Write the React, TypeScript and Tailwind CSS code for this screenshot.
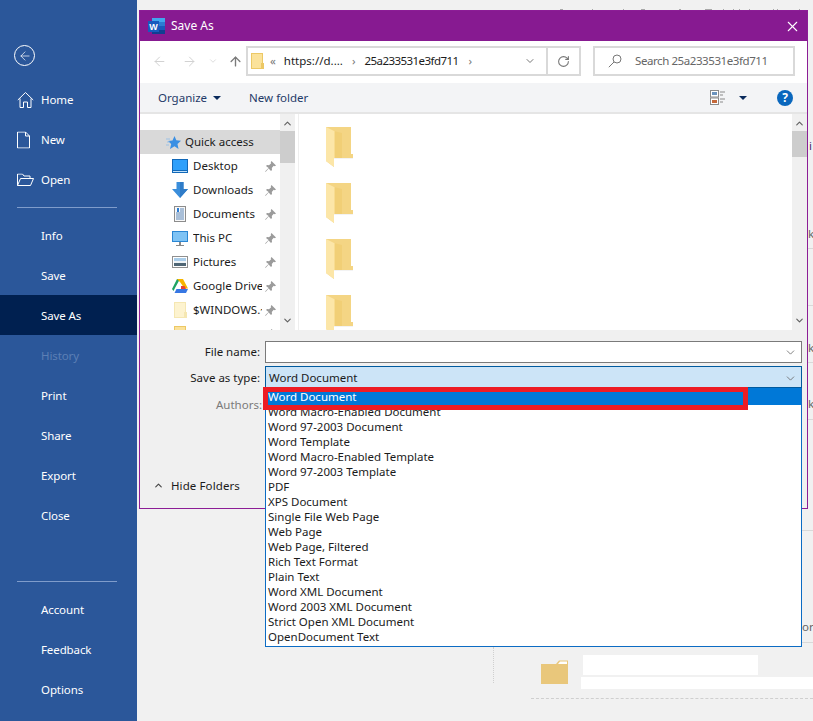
import React from 'react';
import { ArrowLeft, ArrowRight, ArrowUp, ChevronDown, ChevronUp, RotateCw, X } from 'lucide-react';

const font = { fontFamily: '"Noto Sans", "Open Sans", sans-serif' };

const topItems = [
  { label: 'Home', icon: 'home' },
  { label: 'New', icon: 'new' },
  { label: 'Open', icon: 'open' },
];
const midItems = ['Info', 'Save', 'Save As', 'History', 'Print', 'Share', 'Export', 'Close'];
const bottomItems = ['Account', 'Feedback', 'Options'];

const fileTypes = [
  'Word Macro-Enabled Document',
  'Word 97-2003 Document',
  'Word Template',
  'Word Macro-Enabled Template',
  'Word 97-2003 Template',
  'PDF',
  'XPS Document',
  'Single File Web Page',
  'Web Page',
  'Web Page, Filtered',
  'Rich Text Format',
  'Plain Text',
  'Word XML Document',
  'Word 2003 XML Document',
  'Strict Open XML Document',
  'OpenDocument Text',
];

// tops of the letters of the page behind, just above the dialog
const behindDots = [
  [560, 3], [592, 1], [623, 1], [641, 4], [679, 2], [705, 7], [723, 1], [733, 1], [739, 1], [749, 1], [773, 1], [777, 1], [799, 1],
];

function BackstageIcon({ name }: { name: string }) {
  if (name === 'home') {
    return (
      <svg width="17" height="17" viewBox="0 0 17 17" fill="none" stroke="#fff" strokeWidth="1">
        <path d="M.8 8.500 8.500 1l7.700 7.500M3 7v9h3.500v-5.500h4V16H14V7" />
      </svg>
    );
  }
  if (name === 'new') {
    return (
      <svg width="13" height="17" viewBox="0 0 13 17" fill="none" stroke="#fff" strokeWidth="1">
        <path d="M.5.5h8l4 4v12H.5zM8.500.5v4h4" />
      </svg>
    );
  }
  return (
    <svg width="17" height="13" viewBox="0 0 17 13" fill="none" stroke="#fff" strokeWidth="1">
      <path d="M.5 12V.5h5l1.500 2h6v2.500M.5 12l3-7h13l-3 7z" />
    </svg>
  );
}

function WordIcon() {
  return (
    <svg width="17" height="16" viewBox="0 0 17 16">
      <rect x="4" y="0" width="13" height="16" fill="#2b7cd3" />
      <rect x="4" y="0" width="13" height="4" fill="#41a5ee" />
      <rect x="4" y="8" width="13" height="4" fill="#185abd" />
      <rect x="4" y="12" width="13" height="4" fill="#103f91" />
      <rect x="0" y="3" width="11" height="11" fill="#185abd" />
      <text x="5.500" y="12" fill="#fff" fontSize="9" fontWeight="700" textAnchor="middle" style={{ fontFamily: '"Liberation Sans", sans-serif' }}>W</text>
    </svg>
  );
}

function SmallFolder({ pale }: { pale?: boolean }) {
  return (
    <svg width="13" height="16" viewBox="0 0 13 16">
      <rect x="0.500" y="0.500" width="11" height="15" fill={pale ? '#fdf3cf' : '#fbe29a'} stroke={pale ? '#f5e7b2' : '#ecc865'} />
      <rect x="10" y="10" width="3" height="6" fill={pale ? '#f5e7b2' : '#ecc865'} />
    </svg>
  );
}

function BigFolder() {
  return (
    <svg width="28" height="41" viewBox="0 0 28 41" className="shrink-0">
      <path d="M0 0H25V27H27V31H8V40L0 34Z" fill="#f4d584" />
      <path d="M8 4 16 6V31H8Z" fill="#f1cf76" />
      <path d="M0 0L8 4V40L0 34Z" fill="#fce6a8" />
      <path d="M8 4H9V31H8Z" fill="#f8dc90" />
      <path d="M8 31H27V32H8Z" fill="#f3f3f3" />
    </svg>
  );
}

function Pin() {
  return (
    <svg width="11" height="11" viewBox="0 0 11 11" fill="#9b9b9b">
      <path d="M6.500 0 11 4.500 9.800 5.300 8.700 4.800 6.800 7 7 9 6 10 3.600 7.400 1 10.500 0 11 .5 10 3.600 7 1 5 2 4 4 4.200 6.200 2.300 5.700 1.200Z" />
    </svg>
  );
}

function NavIcon({ name }: { name: string }) {
  switch (name) {
    case 'desktop':
      return (
        <svg width="16" height="14" viewBox="0 0 16 14">
          <rect x="0" y="0" width="16" height="14" fill="#1168b8" />
          <rect x="1" y="1" width="14" height="10" fill="#2ea0fb" />
          <rect x="1" y="12" width="14" height="1" fill="#bfe0fa" />
        </svg>
      );
    case 'downloads':
      return (
        <svg width="16" height="16" viewBox="0 0 16 16">
          <path d="M4.500 0h7v7H16l-8 9-8-9h4.500z" fill="#3a8edb" />
          <path d="M8 0h3.500v7H16l-8 9z" fill="#2f7cc8" />
        </svg>
      );
    case 'documents':
      return (
        <svg width="12" height="16" viewBox="0 0 12 16">
          <rect x="0.500" y="0.500" width="11" height="15" fill="#f8f8f8" stroke="#8c8c8c" />
          <path d="M6 3h4M6 5h4M2 7h8M2 9h8M2 11h8M2 13h8" stroke="#5a86b8" strokeWidth="1" />
          <rect x="3" y="2" width="2" height="4" fill="#2b7cd3" />
        </svg>
      );
    case 'pc':
      return (
        <svg width="16" height="15" viewBox="0 0 16 15">
          <rect x="0" y="0" width="16" height="11" fill="#2a86d3" />
          <rect x="1" y="1" width="14" height="9" fill="#7ec3f5" />
          <rect x="7" y="11" width="2" height="3" fill="#8a8a8a" />
          <rect x="4" y="14" width="8" height="1" fill="#8a8a8a" />
        </svg>
      );
    case 'pictures':
      return (
        <svg width="16" height="12" viewBox="0 0 16 12">
          <rect x="0.500" y="0.500" width="15" height="11" fill="#fff" stroke="#8f8f8f" />
          <rect x="2" y="2" width="12" height="4" fill="#a9cdea" />
          <rect x="2" y="5" width="12" height="2" fill="#eef3f6" />
          <rect x="2" y="7" width="12" height="3" fill="#4f6675" />
        </svg>
      );
    case 'drive':
      return (
        <svg width="16" height="14" viewBox="0 0 16 14">
          <path d="M5 0h3l-5 9-1.500 3L0 10z" fill="#1fa463" />
          <path d="M5 0h6l5 9.500h-3.500L8 3z" fill="#f7b500" />
          <path d="M4.500 10H16l-2 4H2.500z" fill="#3777e3" />
          <path d="M9 7h3.500l1.500 3H9z" fill="#e94235" />
        </svg>
      );
    default:
      return <SmallFolder pale={name === 'windows'} />;
  }
}

const navRows = [
  { label: 'Desktop', icon: 'desktop' },
  { label: 'Downloads', icon: 'downloads' },
  { label: 'Documents', icon: 'documents' },
  { label: 'This PC', icon: 'pc' },
  { label: 'Pictures', icon: 'pictures' },
  { label: 'Google Drive', icon: 'drive' },
  { label: '$WINDOWS.~BT', icon: 'windows' },
  { label: 'Backgrounds', icon: 'folder' },
];

export default function App() {
  return (
    <div style={font} className="relative flex h-[721px] w-[813px] overflow-hidden bg-[#f1f1f1] text-[11.5px] text-[#1b1b1b]">
      {/* backstage menu */}
      <aside className="flex w-[137px] shrink-0 flex-col bg-[#2b579a] text-white">
        <div className="flex h-[80px] items-end pb-[14px] pl-[14px]">
          <div className="flex h-[21px] w-[21px] items-center justify-center rounded-full border border-white">
            <ArrowLeft size={14} strokeWidth={1.2} />
          </div>
        </div>
        {topItems.map((item) => (
          <div key={item.label} className="relative flex h-10 items-center pl-[41px] tracking-[-0.1px]">
            <span className="absolute left-[17px] top-1/2 -translate-y-1/2">
              <BackstageIcon name={item.icon} />
            </span>
            {item.label}
          </div>
        ))}
        <div className="ml-[17px] mt-[7px] h-px w-[100px] bg-[#7f9ccb]" />
        <div className="mt-[7px]">
          {midItems.map((label) => (
            <div
              key={label}
              className={`flex h-10 items-center pl-[41px] pt-[2px] tracking-[-0.1px] ${label === 'Save As' ? 'bg-[#002050]' : ''} ${label === 'History' ? 'text-[#5c7fb5]' : ''}`}
            >
              {label}
            </div>
          ))}
        </div>
        <div className="ml-[17px] mt-[46px] h-px w-[100px] bg-[#7f9ccb]" />
        <div className="mt-[8px]">
          {bottomItems.map((label) => (
            <div key={label} className="flex h-10 items-center pl-[41px] tracking-[-0.1px]">
              {label}
            </div>
          ))}
        </div>
      </aside>

      {/* what shows of the page behind the dialog */}
      {behindDots.map(([x, w]) => (
        <div key={x} className="absolute top-[9px] h-px bg-[#a8a8a8]" style={{ left: x, width: w }} />
      ))}
      <div className="absolute left-[809px] top-[137px] text-[#4a2a6a]">i</div>
      <div className="absolute left-[808px] top-[225px] text-[#666]">k</div>
      <div className="absolute left-[808px] top-[339px] text-[#666]">k</div>
      <div className="absolute left-[808px] top-[395px] text-[#666]">k</div>
      <div className="absolute left-[808px] top-[248px] h-px w-[5px] bg-[#d9d9d9]" />
      <div className="absolute left-[808px] top-[305px] h-px w-[5px] bg-[#d9d9d9]" />
      <div className="absolute left-[808px] top-[362px] h-px w-[5px] bg-[#d9d9d9]" />
      <div className="absolute left-[808px] top-[419px] h-px w-[5px] bg-[#d9d9d9]" />
      <div className="absolute left-[802px] top-[530px] h-px w-[11px] bg-[#d9d9d9]" />
      <div className="absolute left-[802px] top-[642px] h-px w-[11px] bg-[#d9d9d9]" />
      <div className="absolute left-[802px] top-[618px] whitespace-nowrap text-[#666]">ork</div>
      <div className="absolute left-[493px] top-[647px] h-[36px] border-l border-dotted border-[#cfcfcf]" />
      <div className="absolute left-[541px] top-[660px]">
        <svg width="28" height="25" viewBox="0 0 28 25">
          <path d="M15 4 18 .5H27V24H0V4Z" fill="#e9c77b" />
          <path d="M17 4 19 1.500H26V4Z" fill="#fff" />
        </svg>
      </div>
      <div className="absolute left-[583px] top-[655px] h-[20px] w-[175px] bg-white" />
      <div className="absolute left-[581px] top-[677px] h-[12px] w-[232px] bg-white" />
      <div className="absolute left-[531px] top-[698px] w-[282px] border-t border-dashed border-[#cfcfcf]" />

      {/* save as dialog */}
      <div className="absolute left-[139px] top-[10px] flex h-[499px] w-[669px] flex-col border border-[#8c1d96] bg-white">
        <div className="flex h-[30px] shrink-0 items-center bg-[#871a91] pl-[8px] pr-[6px] text-white">
          <WordIcon />
          <span className="ml-[6px] text-[12px]">Save As</span>
          <X size={17} strokeWidth={1.5} className="ml-auto" />
        </div>

        <div className="flex h-[42px] shrink-0 items-start pt-[5px]">
          <div className="flex h-[30px] w-[106px] items-center pl-[12px]">
            <ArrowLeft size={15} strokeWidth={1.6} className="text-[#d2d2d2]" />
            <ArrowRight size={15} strokeWidth={1.6} className="ml-[15px] text-[#d2d2d2]" />
            <ChevronDown size={10} strokeWidth={1.8} className="ml-[11px] text-[#d2d2d2]" />
            <ArrowUp size={15} strokeWidth={2.2} className="ml-[10px] text-[#7b7b7b]" />
          </div>
          <div className="flex h-[30px] w-[335px] items-center border-2 border-[#d9d9d9] pl-[3px]">
            <SmallFolder />
            <span className="ml-[6px] text-[#777]">«</span>
            <span className="ml-[8px]">https://d....</span>
            <span className="ml-[9px] text-[#777]">›</span>
            <span className="ml-[9px] tracking-[-0.55px]">25a233531e3fd711</span>
            <span className="ml-[10px] text-[#777]">›</span>
            <div className="ml-auto flex h-full items-center">
              <ChevronDown size={12} strokeWidth={2} className="mr-[10px] text-[#777]" />
              <div className="flex h-full w-[33px] items-center justify-center border-l-2 border-[#d9d9d9]">
                <RotateCw size={13} strokeWidth={2} className="text-[#777]" />
              </div>
            </div>
          </div>
          <div className="ml-[12px] flex h-[30px] w-[202px] items-center border-2 border-[#d9d9d9] pl-[13px] text-[#666]">
            <svg width="14" height="14" viewBox="0 0 14 14" fill="none" stroke="#777" strokeWidth="1">
              <circle cx="9" cy="5" r="4" />
              <path d="M6 8 .8 13.200" />
            </svg>
            <span className="ml-[13px] tracking-[-0.42px]">Search 25a233531e3fd711</span>
          </div>
        </div>

        <div className="flex h-[31px] shrink-0 items-center border-b-2 border-[#e5e5e5] bg-[#f3f4f6] pl-[18px] text-[#1f3a68]">
          <span>Organize</span>
          <span className="ml-[6px] h-0 w-0 border-x-[4px] border-t-[4px] border-x-transparent border-t-[#0a2a5c]" />
          <span className="ml-[28px]">New folder</span>
          <svg width="15" height="15" viewBox="0 0 15 15" className="ml-auto">
            <rect x="0.500" y="0.500" width="8" height="6.500" fill="#fff" stroke="#8a8a8a" />
            <rect x="0.500" y="8" width="8" height="6.500" fill="#fff" stroke="#8a8a8a" />
            <rect x="2" y="2" width="5" height="3" fill="#6b93bd" />
            <rect x="2" y="10" width="5" height="3" fill="#c5683a" />
            <path d="M10 2h5M10 5h3M10 9h5M10 12h3" stroke="#8a8a8a" />
          </svg>
          <span className="ml-[14px] h-0 w-0 border-x-[4px] border-t-[4px] border-x-transparent border-t-[#0a2a5c]" />
          <span className="ml-[30px] mr-[14px] flex h-4 w-4 items-center justify-center rounded-full bg-[#0a67bd] text-[12px] font-bold leading-none text-white">?</span>
        </div>

        <div className="flex h-[216px] shrink-0 overflow-hidden">
          {/* nav pane */}
          <div className="w-[140px] shrink-0 overflow-hidden pt-[16px]">
            <div className="flex h-6 items-center bg-[#d9d9d9] pl-[26px]">
              <svg width="15" height="13" viewBox="0 0 15 13">
                <path d="M8.500 0 10.300 4.300 15 4.800 11.500 8 12.500 13 8.500 10.300 4 13 5.200 8 2 5 6.500 4.500Z" fill="#3a8fe3" />
                <path d="M0 3h4M1 6h3M0 9h3" stroke="#8dbbe8" strokeWidth="0.800" />
              </svg>
              <span className="ml-[4px]">Quick access</span>
            </div>
            {navRows.map((row) => (
              <div key={row.label} className="flex h-6 items-center pl-[32px]">
                <span className="flex w-[16px] shrink-0 justify-center">
                  <NavIcon name={row.icon} />
                </span>
                <span className="ml-[5px] w-[69px] overflow-hidden whitespace-nowrap">{row.label}</span>
                <span className="ml-auto mr-[4px] shrink-0">
                  <Pin />
                </span>
              </div>
            ))}
          </div>
          <div className="relative flex w-[15px] shrink-0 flex-col items-center justify-between bg-[#f0f0f0] py-[4px]">
            <ChevronUp size={11} strokeWidth={2.5} className="text-[#606060]" />
            <div className="absolute left-0 top-[17px] h-[32px] w-[15px] bg-[#cdcdcd]" />
            <ChevronDown size={11} strokeWidth={2.5} className="text-[#606060]" />
          </div>
          {/* file list */}
          <div className="ml-[3px] flex flex-1 flex-col gap-[15px] overflow-hidden border-l border-[#eeeeee] pl-[27px] pt-[13px]">
            <BigFolder />
            <BigFolder />
            <BigFolder />
            <BigFolder />
          </div>
          <div className="relative flex w-[15px] shrink-0 flex-col items-center justify-between bg-[#f0f0f0] py-[4px]">
            <ChevronUp size={11} strokeWidth={2.5} className="text-[#606060]" />
            <div className="absolute left-0 top-[17px] h-[26px] w-[15px] bg-[#cdcdcd]" />
            <ChevronDown size={11} strokeWidth={2.5} className="text-[#606060]" />
          </div>
        </div>

        <div className="relative flex-1 bg-[#f0f0f0] pt-[11px]">
          <div className="flex h-[22px] items-center">
            <span className="w-[120px] text-right">File name:</span>
            <div className="ml-[5px] flex h-[22px] w-[537px] items-center justify-end border border-[#7a7a7a] bg-white pr-[4px]">
              <ChevronDown size={13} strokeWidth={1.5} className="text-[#666]" />
            </div>
          </div>
          <div className="mt-[3px] flex h-[22px] items-center">
            <span className="w-[120px] pt-[2px] text-right">Save as type:</span>
            <div className="ml-[5px] flex h-[22px] w-[537px] items-center justify-between border border-[#005a9e] bg-[#cce4f7] pl-[3px] pr-[4px] pt-[2px]">
              Word Document
              <ChevronDown size={13} strokeWidth={1.5} className="text-[#666]" />
            </div>
          </div>
          <div className="mt-[8px] w-[122px] text-right text-[#7a7a7a]">Authors:</div>
          <div className="absolute bottom-[14px] left-[13px] flex items-center">
            <ChevronUp size={11} strokeWidth={2.5} className="text-[#444]" />
            <span className="ml-[7px] tracking-[0.1px]">Hide Folders</span>
          </div>
        </div>
      </div>

      {/* open type list */}
      <div className="absolute left-[265px] top-[388px] h-[259px] w-[537px] border border-t-0 border-[#0c6cc4] bg-white leading-[15px]">
        <div className="-mb-px h-[17px] bg-[#0078d7] pl-[2px] pt-px text-white">Word Document</div>
        {fileTypes.map((type) => (
          <div key={type} className="relative h-[15px] whitespace-nowrap pl-[2px]">{type}</div>
        ))}
      </div>
      {/* red annotation */}
      <div className="absolute left-[263px] top-[387px] h-[23px] w-[485px] border-[5px] border-[#ed1c24]" />
    </div>
  );
}
